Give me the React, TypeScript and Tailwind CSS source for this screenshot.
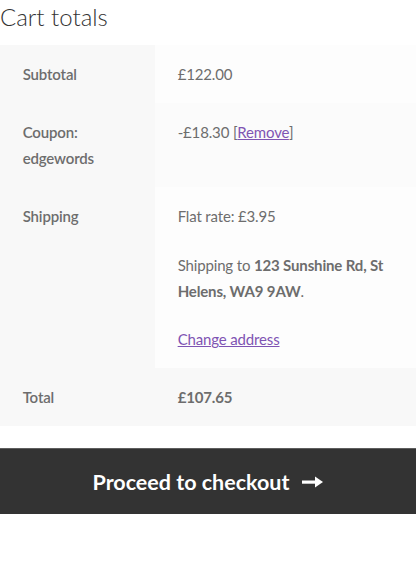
import React from 'react';

const rowTh = 'bg-[#f8f8f8] align-top text-left font-semibold px-[22.65px] py-4 w-[155px]';
const rowTd = 'align-top text-left px-[22.65px] py-4';

const App: React.FC = () => {
  return (
    <div className="w-[416px] bg-white text-[#6d6d6d] text-[15px] leading-[26px] tracking-[-0.15px] font-['Lato','Liberation_Sans',sans-serif]">
      {/* Heading */}
      <h2 className="text-[24px] leading-[34px] font-light text-[#333] mb-[11px] tracking-normal">Cart totals</h2>

      {/* Totals table */}
      <table className="w-full border-collapse table-fixed">
        <tbody>
          <tr>
            <th className={`${rowTh} h-[58px]`}>Subtotal</th>
            <td className={`${rowTd} bg-[#fdfdfd]`}>£122.00</td>
          </tr>
          <tr>
            <th className={`${rowTh} h-[84px]`}>
              Coupon:
              <br />
              edgewords
            </th>
            <td className={`${rowTd} bg-[#fbfbfb]`}>
              -£18.30 [<a href="#" className="text-[#7f54b3] underline">Remove</a>]
            </td>
          </tr>
          <tr>
            <th className={rowTh}>Shipping</th>
            <td className={`${rowTd} bg-[#fdfdfd]`}>
              <ul className="m-0">
                <li>Flat rate: £3.95</li>
              </ul>
              <p className="mt-[22.65px]">
                Shipping to <strong className="font-bold">123 Sunshine Rd, St Helens, WA9 9AW</strong>.
              </p>
              <p className="mt-[22.65px]">
                <a href="#" className="text-[#7f54b3] underline">Change address</a>
              </p>
            </td>
          </tr>
          <tr>
            <th className={`${rowTh} h-[58px]`}>Total</th>
            <td className={`${rowTd} bg-[#f8f8f8] font-bold`}>£107.65</td>
          </tr>
        </tbody>
      </table>

      {/* Checkout button */}
      <div className="mt-[22px]">
        <a
          href="#"
          className="flex items-center justify-center gap-[13px] h-[66px] bg-[#333333] border-t border-[#5e5e5e] text-white text-[21.5px] font-bold tracking-normal"
        >
          <span>Proceed to checkout</span>
          <svg width="21" height="12" viewBox="0 0 21 12" className="mt-px">
            <rect x="0" y="4.5" width="15" height="3.2" fill="#fff" />
            <path d="M13 0.5 L21 6 L13 11.5 Z" fill="#fff" />
          </svg>
        </a>
      </div>
    </div>
  );
};

export default App;
